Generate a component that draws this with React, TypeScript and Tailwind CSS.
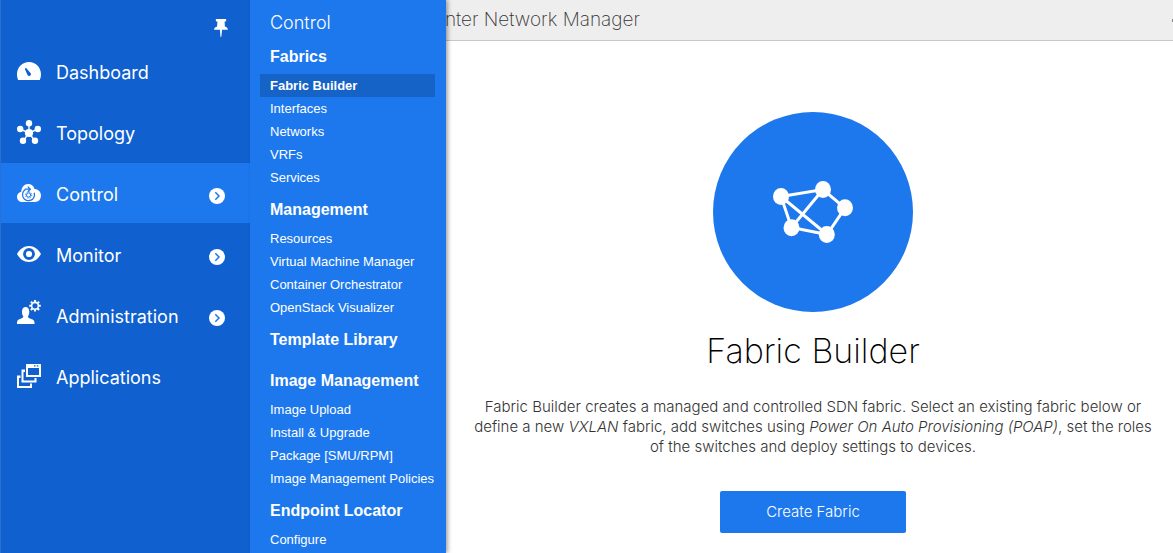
import type { ReactNode } from "react";

const icons: Record<string, ReactNode> = {
  dashboard: (
    <svg width="24" height="18" viewBox="0 0 24 18" fill="currentColor" aria-hidden="true">
      <path
        fillRule="evenodd"
        d="M1.2 18A12 12 0 0 1 0 12.3C0 5.4 5.4 0 12 0s12 5.4 12 12.3c0 2-.4 4-1.2 5.7ZM8.400 6.200c-.5.300-.5.700-.3 1.200l2.400 5.500c.5 1 1.500 1.300 2.500.900 1-.5 1.300-1.600.700-2.500L9.600 6.500c-.3-.4-.7-.5-1.200-.3Z"
      />
    </svg>
  ),
  topology: (
    <svg width="24" height="24" viewBox="0 0 24 24" fill="currentColor" stroke="currentColor" aria-hidden="true">
      <g strokeWidth="1.4">
        <path d="M12 3v10M3 9l9 4 9-4M6 21l6-8 6 8" fill="none" />
      </g>
      <g stroke="none">
        <circle cx="12" cy="13" r="4.1" />
        <circle cx="12" cy="3.2" r="3.2" />
        <circle cx="3.2" cy="9" r="3.2" />
        <circle cx="20.8" cy="9" r="3.2" />
        <circle cx="6" cy="20.8" r="3.2" />
        <circle cx="18" cy="20.8" r="3.2" />
      </g>
    </svg>
  ),
  control: (
    <svg width="24" height="18" viewBox="0 0 24 18" aria-hidden="true">
      <path
        fill="currentColor"
        d="M5 18a5 5 0 0 1-5-5.200c0-2.500 1.800-4.500 4.200-5C4.400 3.300 7.300 0 11.200 0c3 0 5.400 1.900 6.400 4.900C21.200 5 24 7.700 24 11.500c0 3.700-2.500 6.500-6 6.500Z"
      />
      <g fill="none" stroke="#1d78ee">
        <path d="M8.300 5.600A6 6 0 1 0 17.200 8.800" strokeWidth="1.3" />
        <path d="M7.800 5.200H13M10.800 2.600 13.300 5.200l-2.500 2.500" strokeWidth="1.3" />
        <circle cx="11.600" cy="11" r="2.100" strokeWidth="1" />
        <circle cx="11.600" cy="11" r="3.100" strokeWidth="1" strokeDasharray="1.2 1.24" />
      </g>
    </svg>
  ),
  monitor: (
    <svg width="24" height="16" viewBox="0 0 24 16" fill="currentColor" aria-hidden="true">
      <path
        fillRule="evenodd"
        d="M12 0c5 0 9.300 3 12 8-2.700 5-7 8-12 8S2.700 13 0 8C2.700 3 7 0 12 0Zm0 2.100a5.900 5.900 0 1 0 0 11.800 5.900 5.900 0 0 0 0-11.800Zm0 2.800a3.100 3.100 0 1 1 0 6.200 3.100 3.100 0 0 1 0-6.200Z"
      />
    </svg>
  ),
  administration: (
    <svg width="24" height="30" viewBox="0 0 24 30" fill="currentColor" aria-hidden="true">
      <path d="M0 24v-1.500c0-2 1-2.800 3-3.600 1.800-.7 3.200-1.100 3.400-2.400C5.300 15.300 5 13.800 5 11.800 5 9 6.300 7 8.600 7s3.700 2 3.700 4.800c0 2-.4 3.500-1.500 4.700.2 1.300 1.700 1.700 3.500 2.400 2 .8 3.200 1.600 3.200 3.600V24Z" />
      <g fill="none" stroke="currentColor">
        <circle cx="18" cy="5.800" r="3.400" strokeWidth="1.6" />
        <path
          d="M18 0v2M18 9.600v2M12.200 5.800h2M21.800 5.800h2M13.900 1.700l1.400 1.400M20.700 8.500l1.400 1.400M22.100 1.700l-1.400 1.400M15.300 8.500l-1.400 1.400"
          strokeWidth="2.1"
        />
      </g>
    </svg>
  ),
  applications: (
    <svg width="24" height="24" viewBox="0 0 24 24" fill="currentColor" aria-hidden="true">
      <path
        fillRule="evenodd"
        d="M9.500 0h14a.5.5 0 0 1 .5.5v12a.5.5 0 0 1-.5.5h-14a.5.5 0 0 1-.5-.5V.5A.5.5 0 0 1 9.500 0ZM11 4v7h11V4ZM17 1.200v1.300h1.500V1.200Zm2.800 0v1.300h1.500V1.200Z"
      />
      <path d="M4.500 5.500H8V8H6.500v8.500h11V14h2v4.500h-15Z" />
      <path d="M0 11.500h3.500V14H2v8h11v-2.500h2V24H0Z" />
    </svg>
  ),
};

const sections = [
  { id: "dashboard", label: "Dashboard" },
  { id: "topology", label: "Topology" },
  { id: "control", label: "Control", nested: true },
  { id: "monitor", label: "Monitor", nested: true },
  { id: "administration", label: "Administration", nested: true },
  { id: "applications", label: "Applications" },
];

const groups = [
  { title: "Fabrics", links: ["Fabric Builder", "Interfaces", "Networks", "VRFs", "Services"] },
  {
    title: "Management",
    links: ["Resources", "Virtual Machine Manager", "Container Orchestrator", "OpenStack Visualizer"],
  },
  { title: "Template Library", links: [] },
  {
    title: "Image Management",
    links: ["Image Upload", "Install & Upgrade", "Package [SMU/RPM]", "Image Management Policies"],
  },
  { title: "Endpoint Locator", links: ["Configure"] },
];

function MainNav() {
  return (
    <nav aria-label="Main" className="flex w-[250px] shrink-0 flex-col border-l border-[#2a70d4] bg-[#1060d0]">
      <div className="flex h-[41px] shrink-0 items-end justify-end pr-[22px] pb-1">
        <button type="button" aria-label="Pin menu">
          <svg width="14" height="18" viewBox="0 0 14 18" fill="currentColor" aria-hidden="true">
            <path d="M2.500 0h9c.5 0 .7.300.7.800v1c0 .5-.3.800-.8.800h-.8l.3 4.900c1.600.6 2.800 1.300 3 3.200H8.100L7.300 18h-.8L5.900 10.700H0c.2-1.900 1.500-2.600 3.100-3.200l.3-4.900h-.8c-.5 0-.8-.3-.8-.8v-1c0-.5.2-.8.7-.8Z" />
          </svg>
        </button>
      </div>
      <ul className="flex flex-col gap-px">
        {sections.map((s) => (
          <li key={s.id}>
            <a
              href={`#${s.id}`}
              className={`flex h-[60px] items-center pr-[25px] pl-4 ${s.id === "control" ? "bg-[#1d78ee]" : ""}`}
            >
              {icons[s.id]}
              <span className="ml-[15px] flex-1 pt-1 text-[18px] leading-6">{s.label}</span>
              {s.nested && (
                <span className="pt-[6px]">
                  <svg width="16" height="16" viewBox="0 0 16 16" aria-hidden="true">
                    <circle cx="8" cy="8" r="8" fill="currentColor" />
                    <path d="m6.300 4.300 3.700 3.700-3.700 3.700" fill="none" stroke="#1d78ee" strokeWidth="1.5" />
                  </svg>
                </span>
              )}
            </a>
          </li>
        ))}
      </ul>
    </nav>
  );
}

function ControlMenu() {
  return (
    <nav
      aria-label="Control"
      className="z-10 w-[196px] shrink-0 bg-[#1d78ee] px-[10px] pt-[11px] font-['Liberation_Sans',Arial,sans-serif] shadow-[2px_0_4px_rgba(0,0,0,0.35)]"
    >
      <h2 className="px-[10px] pb-px font-['Inter',sans-serif] text-[18px] leading-6 font-light">Control</h2>
      {groups.map((g) => (
        <section key={g.title} className="mt-[9px] flex flex-col gap-[5px]">
          <h3 className="px-[10px] text-[16px] leading-6 font-bold">{g.title}</h3>
          <ul className="min-h-[3px]">
            {g.links.map((l) => (
              <li key={l}>
                <a
                  href="#control"
                  className={`block px-[10px] text-[13px] leading-[23px] whitespace-nowrap ${
                    l === "Fabric Builder" ? "mr-px bg-[#1663c7] font-bold" : ""
                  }`}
                >
                  {l}
                </a>
              </li>
            ))}
          </ul>
        </section>
      ))}
    </nav>
  );
}

function FabricMark() {
  return (
    <div className="flex size-[200px] items-center justify-center rounded-full bg-[#1d78ee]">
      <svg width="80" height="62" viewBox="0 0 80 62" aria-hidden="true">
        <path
          d="M8 15.500 50 8.500 72 27 54 53.500 18.500 46.500ZM8 15.500 54 53.500M50 8.500 18.500 46.500"
          fill="none"
          stroke="white"
          strokeWidth="3"
        />
        <g fill="white">
          <ellipse cx="8" cy="15.500" rx="8" ry="8.500" />
          <ellipse cx="50" cy="8.500" rx="8" ry="8.500" />
          <ellipse cx="72" cy="26.800" rx="8" ry="8.500" />
          <ellipse cx="53.800" cy="53.500" rx="8" ry="8.500" />
          <ellipse cx="18.500" cy="46.700" rx="8" ry="8.500" />
        </g>
      </svg>
    </div>
  );
}

export default function App() {
  return (
    <div className="flex h-screen overflow-hidden bg-white font-['Inter',sans-serif] text-white">
      <MainNav />
      <ControlMenu />
      <div className="min-w-0 flex-1 text-[#333]">
        <header className="flex h-[41px] items-center justify-between border-b border-[#c8c8c8] bg-[#eee]">
          <div className="flex w-[194px] justify-end overflow-hidden text-[19px] leading-7 font-extralight whitespace-nowrap">
            Center Network Manager
          </div>
          <span className="h-[3px] w-px bg-[#888]" />
        </header>
        <main className="flex flex-col items-center pt-[71px] pl-[7px] text-center">
          <FabricMark />
          <h1 className="mt-[15px] text-[34px] leading-[48px] font-extralight text-black">Fabric Builder</h1>
          <p className="mt-[22px] max-w-[690px] text-[15px] leading-5 font-light">
            Fabric Builder creates a managed and controlled SDN fabric. Select an existing fabric below or define a new{" "}
            <em>VXLAN</em> fabric, add switches using <em>Power On Auto Provisioning (POAP)</em>, set the roles of the
            switches and deploy settings to devices.
          </p>
          <button type="button" className="mt-[34px] h-[42px] rounded-[2px] bg-[#1d78ee] px-[46px] text-[15px] font-light text-white">
            Create Fabric
          </button>
        </main>
      </div>
    </div>
  );
}
